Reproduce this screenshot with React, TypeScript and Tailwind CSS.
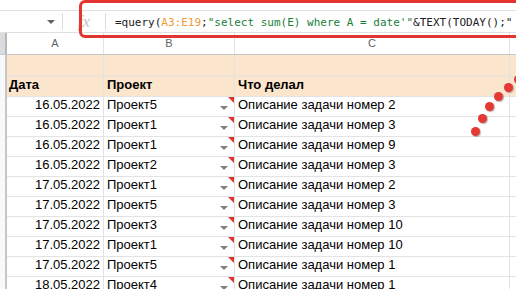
import React from "react";

const rows: [string, string, string][] = [
  ["16.05.2022", "Проект5", "Описание задачи номер 2"],
  ["16.05.2022", "Проект1", "Описание задачи номер 3"],
  ["16.05.2022", "Проект1", "Описание задачи номер 9"],
  ["16.05.2022", "Проект2", "Описание задачи номер 3"],
  ["17.05.2022", "Проект1", "Описание задачи номер 2"],
  ["17.05.2022", "Проект5", "Описание задачи номер 3"],
  ["17.05.2022", "Проект3", "Описание задачи номер 10"],
  ["17.05.2022", "Проект1", "Описание задачи номер 10"],
  ["17.05.2022", "Проект5", "Описание задачи номер 1"],
  ["18.05.2022", "Проект4", "Описание задачи номер 1"],
];

const dots: [number, number][] = [
  [518, 79],
  [508, 87],
  [498, 96],
  [489, 106],
  [482, 118],
  [475, 131],
];

function RowNum({ h }: { h: string }) {
  return <div className={`w-[7px] shrink-0 bg-[#f8f9fa] border-r-2 border-[#c7c7c7] ${h}`} />;
}

export default function App() {
  return (
    <div
      className="relative w-[516px] h-[289px] overflow-hidden bg-white text-[13px] text-black"
      style={{ fontFamily: '"Liberation Sans", Arial, sans-serif' }}
    >
      <div className="h-[10px]" />
      {/* formula bar */}
      <div className="h-[23px] flex items-center border-y border-[#e0e0e0]">
        <div className="w-[62px] h-full flex items-center justify-end pr-[7px]">
          <div className="w-0 h-0 border-l-[4px] border-r-[4px] border-t-[4px] border-l-transparent border-r-transparent border-t-[#5f6368]" />
        </div>
        <div className="w-px h-[17px] bg-[#dadce0]" />
        <div className="w-[42px] h-full flex items-center justify-center">
          <span
            className="italic text-[17px] text-[#c4c4c4] leading-none"
            style={{ fontFamily: '"Liberation Serif", serif' }}
          >
            fx
          </span>
        </div>
        <div className="w-px h-[17px] bg-[#dadce0]" />
        <div
          className="pl-[9px] whitespace-nowrap text-[11px] text-[#202124] leading-none pt-[1px]"
          style={{ fontFamily: '"DejaVu Sans Mono", monospace' }}
        >
          =query(<span className="text-[#f09a3a]">A3:E19</span>;
          <span className="text-[#188038]">"select sum(E) where A = date'"</span>&amp;TEXT(TODAY();"
        </div>
      </div>
      {/* column headers */}
      <div className="h-[22px] flex border-b border-[#c7c7c7] text-[11px] text-[#5f6368]">
        <div className="w-[7px] shrink-0 bg-[#dadce0] border-r-2 border-[#b8b8b8]" />
        <div className="w-[97px] shrink-0 flex items-center justify-center border-r border-[#e2e3e3]">A</div>
        <div className="w-[131px] shrink-0 flex items-center justify-center border-r border-[#e2e3e3]">B</div>
        <div className="w-[275px] shrink-0 flex items-center justify-center border-r border-[#e2e3e3]">C</div>
        <div className="flex-1" />
      </div>
      {/* row 1 empty orange */}
      <div className="h-[22px] flex">
        <RowNum h="h-full" />
        <div className="flex-1 flex bg-[#fce5cd] border-b border-[#e2e3e3]">
          <div className="w-[97px] shrink-0 border-r border-[#e2e3e3]" />
          <div className="w-[131px] shrink-0 border-r border-[#e2e3e3]" />
          <div className="w-[275px] shrink-0 border-r border-[#e2e3e3]" />
        </div>
      </div>
      {/* header row */}
      <div className="h-[20px] flex font-bold">
        <RowNum h="h-full" />
        <div className="flex-1 flex bg-[#fce5cd] border-b border-[#e2e3e3]">
          <div className="w-[97px] shrink-0 border-r border-[#e2e3e3] pl-[2px] flex items-end pb-[2px]">Дата</div>
          <div className="w-[131px] shrink-0 border-r border-[#e2e3e3] pl-[3px] flex items-end pb-[2px]">Проект</div>
          <div className="w-[275px] shrink-0 border-r border-[#e2e3e3] pl-[3px] flex items-end pb-[2px]">Что делал</div>
        </div>
      </div>
      {rows.map(([d, p, t], i) => (
        <div key={i} className="h-[20px] flex">
          <RowNum h="h-full" />
          <div className="flex-1 flex border-b border-[#e2e3e3]">
            <div className="w-[97px] shrink-0 border-r border-[#e2e3e3] pr-[3px] flex items-end justify-end pb-[2px]">
              {d}
            </div>
            <div className="relative w-[131px] shrink-0 border-r border-[#e2e3e3] pl-[3px] flex items-end pb-[2px]">
              {p}
              <div className="absolute right-[6px] top-[9px] w-0 h-0 border-l-[4px] border-r-[4px] border-t-[4px] border-l-transparent border-r-transparent border-t-[#7f7f7f]" />
              <div className="absolute right-0 top-0 w-0 h-0 border-l-[6px] border-b-[6px] border-l-transparent border-b-transparent border-t-0 border-r-[6px] border-r-[#e0312b]" style={{ borderTopWidth: 0 }} />
            </div>
            <div className="w-[275px] shrink-0 border-r border-[#e2e3e3] pl-[3px] flex items-end pb-[2px]">{t}</div>
          </div>
        </div>
      ))}
      {/* red highlight box */}
      <div className="absolute left-[79px] top-0 w-[470px] h-[38px] border-[3px] border-[#e3342f] rounded-[6px]" />
      {/* red dots */}
      {dots.map(([x, y], i) => (
        <div
          key={i}
          className="absolute w-[9px] h-[9px] rounded-full bg-[#e53935] shadow-[1px_1px_1px_rgba(0,0,0,0.3)]"
          style={{ left: x - 4.5, top: y - 4.5 }}
        />
      ))}
    </div>
  );
}
